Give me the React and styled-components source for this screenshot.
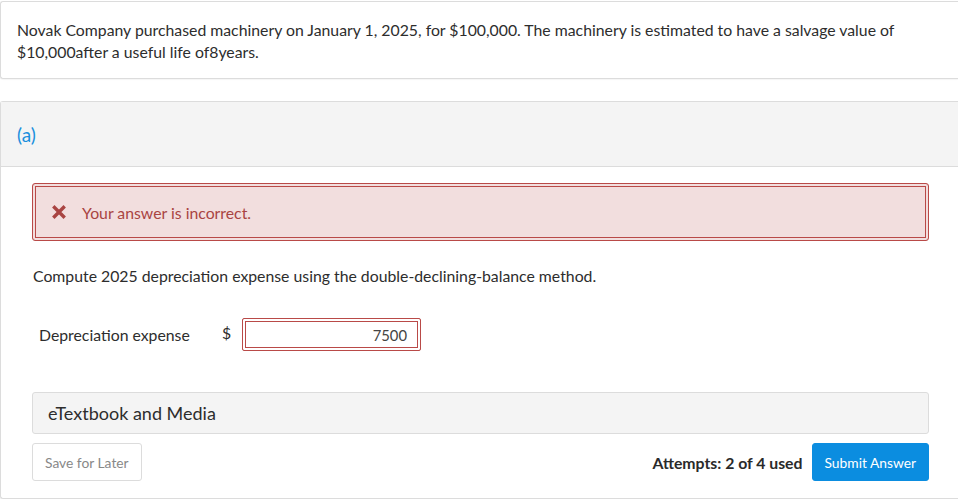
import React from "react";
import styled, { createGlobalStyle } from "styled-components";

const Global = createGlobalStyle`
  html, body { margin: 0; padding: 0; background: #fff; }
  body { font-family: Lato, "Open Sans", "Liberation Sans", sans-serif; color: #333; }
  * { box-sizing: border-box; }
`;

const Page = styled.div`
  width: 958px;
  display: flex;
  flex-direction: column;
  gap: 22px;
  padding-top: 1px;
`;

const Card = styled.section`
  border: 1px solid #dcdcdc;
  border-right: none;
  border-radius: 3px 0 0 3px;
  background: #fff;
  box-shadow: 0 1px 1px rgba(0,0,0,0.04);
`;

const Question = styled.p`
  margin: 0;
  padding: 17px 50px 15px 16px;
  font-size: 15.8px;
  line-height: 22px;
  color: #2d2d2d;
`;

const PartHeader = styled.div`
  background: #f4f4f4;
  border-bottom: 1px solid #dcdcdc;
  height: 65px;
  display: flex;
  align-items: center;
  padding-left: 16px;
  font-size: 19px;
  color: #1a8fdd;
`;

const PartBody = styled.div`
  padding: 16px 29px 17px 31px;
  display: flex;
  flex-direction: column;
`;

const Alert = styled.div`
  height: 58px;
  border: 1px solid #b94a48;
  border-radius: 3px;
  background: #f2dede;
  box-shadow: inset 0 0 0 2px #f2dede, inset 0 0 0 3px #b94a48;
  display: flex;
  align-items: center;
  gap: 16px;
  padding-left: 19px;
  font-size: 15.8px;
  color: #a94442;
`;

const Instruction = styled.p`
  margin: 25px 0 0 1px;
  font-size: 15.8px;
  line-height: 20px;
  color: #2d2d2d;
`;

const FieldRow = styled.div`
  display: flex;
  align-items: center;
  margin-top: 32px;
  padding-left: 7px;
  font-size: 15.8px;
`;

const FieldLabel = styled.span`
  width: 183px;
  color: #2d2d2d;
`;

const Currency = styled.span`
  width: 20px;
  color: #2d2d2d;
  margin-top: -4px;
`;

const AnswerInput = styled.div`
  width: 179px;
  height: 33px;
  border: 1px solid #b94a48;
  border-radius: 2px;
  box-shadow: inset 0 0 0 2px #fff, inset 0 0 0 3px #b94a48;
  display: flex;
  align-items: center;
  justify-content: flex-end;
  padding-right: 13px;
  font-size: 14.8px;
  color: #444;
`;

const MediaBar = styled.div`
  margin-top: 41px;
  height: 42px;
  background: #f4f4f4;
  border: 1px solid #dcdcdc;
  border-radius: 3px;
  display: flex;
  align-items: center;
  padding-left: 15px;
  font-size: 18px;
  color: #2d2d2d;
`;

const Footer = styled.div`
  margin-top: 9px;
  display: flex;
  align-items: center;
  gap: 9px;
`;

const Button = styled.button`
  height: 38px;
  border-radius: 3px;
  font-family: inherit;
  font-size: 13.8px;
  padding: 0 12px;
  border: 1px solid ${(p) => (p.$primary ? "#0b8de0" : "#dcdcdc")};
  background: ${(p) => (p.$primary ? "#0b8de0" : "#fff")};
  color: ${(p) => (p.$primary ? "#fff" : "#888")};
`;

const Attempts = styled.span`
  margin-left: auto;
  font-size: 15.8px;
  font-weight: 700;
  color: #2a2a2a;
`;

const XIcon = () => (
  <svg width="14" height="14" viewBox="0 0 14 14" aria-hidden="true">
    <path d="M2.5 2.5 L11.5 11.5 M11.5 2.5 L2.5 11.5" stroke="#a94442" strokeWidth="3.4" strokeLinecap="square" />
  </svg>
);

export default function App() {
  return (
    <>
      <Global />
      <Page>
        <Card>
          <Question>
            Novak Company purchased machinery on January 1, 2025, for $100,000. The machinery is estimated to have a salvage value of $10,000after a useful life of8years.
          </Question>
        </Card>
        <Card>
          <PartHeader>(a)</PartHeader>
          <PartBody>
            <Alert>
              <XIcon />
              <span>Your answer is incorrect.</span>
            </Alert>
            <Instruction>
              Compute 2025 depreciation expense using the double-declining-balance method.
            </Instruction>
            <FieldRow>
              <FieldLabel>Depreciation expense</FieldLabel>
              <Currency>$</Currency>
              <AnswerInput>7500</AnswerInput>
            </FieldRow>
            <MediaBar>eTextbook and Media</MediaBar>
            <Footer>
              <Button>Save for Later</Button>
              <Attempts>Attempts: 2 of 4 used</Attempts>
              <Button $primary>Submit Answer</Button>
            </Footer>
          </PartBody>
        </Card>
      </Page>
    </>
  );
}
